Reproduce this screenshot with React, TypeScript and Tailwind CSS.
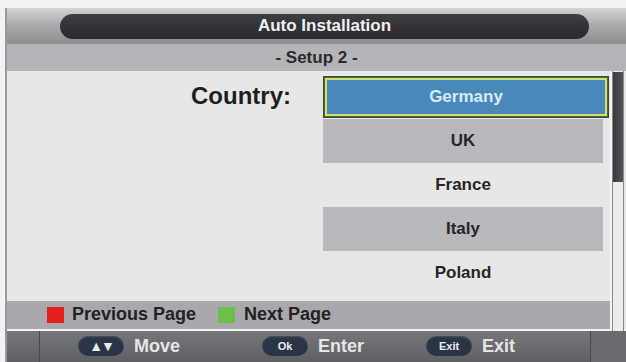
import React from 'react';

const countries = [
  { name: 'Germany', kind: 'selected' },
  { name: 'UK', kind: 'gray' },
  { name: 'France', kind: 'light' },
  { name: 'Italy', kind: 'gray' },
  { name: 'Poland', kind: 'light' },
];

function CountryRow({ name, kind }: { name: string; kind: string }) {
  if (kind === 'selected') {
    return (
      <div className="h-[44px] pt-[1px] pb-[1px]">
        <div className="h-full w-[286px] border border-[#3e4a2c] bg-[#4a6a3a] p-[1px]">
          <div className="flex h-full items-center justify-center border-2 border-[#d2de74] bg-[#4a88b9] text-[17px] font-bold text-[#d6ecf6]">
            {name}
          </div>
        </div>
      </div>
    );
  }
  return (
    <div
      className={`flex h-[44px] w-[280px] items-center justify-center text-[17px] font-bold text-[#262626] ${
        kind === 'gray' ? 'bg-[#b9b9bd]' : 'bg-[#e7e7e7]'
      }`}
    >
      {name}
    </div>
  );
}

function KeyPill({ label, big }: { label: string; big?: boolean }) {
  return (
    <span
      className={`flex h-[20px] w-[46px] items-center justify-center rounded-full bg-[#2b3447] font-bold text-[#e8ebf0] shadow-[inset_0_1px_2px_rgba(255,255,255,0.15)] ${
        big ? 'text-[14px] tracking-[-2px]' : 'text-[11px]'
      }`}
    >
      {label}
    </span>
  );
}

export default function App() {
  return (
    <div
      className="h-[362px] w-[626px] overflow-hidden bg-[#f3f3f3] pt-[8px] pl-[5px]"
      style={{ fontFamily: '"Liberation Sans", Arial, sans-serif' }}
    >
      <div className="flex h-[354px] flex-col border-l-2 border-[#9a9a9c]">
        {/* title band */}
        <div className="flex h-[37px] items-center bg-gradient-to-b from-[#d4d4d6] via-[#a8a8ab] to-[#8e8e91] pl-[53px] pr-[37px]">
          <div className="flex h-[25px] flex-1 items-center justify-center rounded-full bg-gradient-to-b from-[#3c3e42] to-[#28292c] text-[17px] font-bold text-[#f0f0f0]">
            Auto Installation
          </div>
        </div>

        {/* setup line */}
        <div className="flex h-[27px] items-center justify-center bg-[#b5b5b9] text-[17px] font-bold text-[#2a2a2a]">
          - Setup 2 -
        </div>

        <div className="flex">
          <div className="flex w-[603px] flex-col">
            {/* content */}
            <div className="flex h-[230px] bg-[#e7e7e7] pt-[4px]">
              <div className="w-[285px] pr-[1px] pt-[3px] text-right text-[24px] font-bold text-[#1e1e1e]">
                Country:
              </div>
              <div className="ml-[31px] flex flex-col">
                {countries.map((c) => (
                  <CountryRow key={c.name} name={c.name} kind={c.kind} />
                ))}
              </div>
            </div>

            {/* colour keys */}
            <div className="flex h-[28px] items-center bg-[#a9a9ad] pl-[40px] text-[18px] font-bold text-[#222]">
              <span className="mr-[8px] h-[16px] w-[17px] bg-[#e41e1e]" />
              <span>Previous Page</span>
              <span className="ml-[22px] mr-[9px] h-[16px] w-[17px] bg-[#6cc048]" />
              <span>Next Page</span>
            </div>
          </div>

          {/* scrollbar */}
          <div className="ml-[2px] flex h-[260px] w-[12px] flex-col border-x border-[#8a8a8e] bg-[#ececec]">
            <div className="mt-[1px] h-[110px] bg-gradient-to-r from-[#3a3a3e] to-[#55555a]" />
          </div>
          <div className="h-[258px] flex-1 bg-[#e7e7e7]" />
        </div>

        {/* help bar */}
        <div className="flex h-[32px] items-center bg-gradient-to-b from-[#76777b] to-[#5f6064] text-[18px] font-bold text-[#e6e6e6]">
          <div className="h-full w-[33px] border-r border-[#4a4b4f]" />
          <div className="ml-[38px] flex items-center">
            <KeyPill label="▲▼" big />
            <span className="ml-[10px]">Move</span>
          </div>
          <div className="ml-[82px] flex items-center">
            <KeyPill label="Ok" />
            <span className="ml-[10px]">Enter</span>
          </div>
          <div className="ml-[62px] flex items-center">
            <KeyPill label="Exit" />
            <span className="ml-[10px]">Exit</span>
          </div>
          <div className="ml-auto h-full w-[36px] border-l border-[#4a4b4f] bg-[#6a6b6f]" />
        </div>
      </div>
    </div>
  );
}
